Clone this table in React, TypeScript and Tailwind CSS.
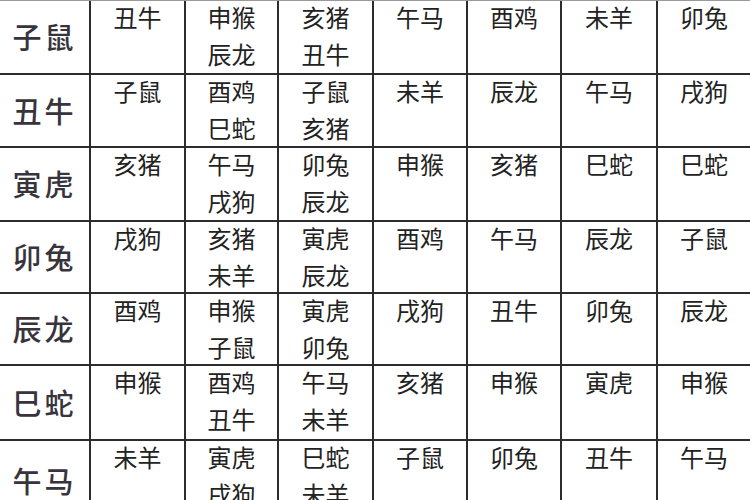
import { Fragment } from 'react';

const rows: [string, string[][]][] = [
  ['子鼠', [['丑牛'], ['申猴', '辰龙'], ['亥猪', '丑牛'], ['午马'], ['酉鸡'], ['未羊'], ['卯兔']]],
  ['丑牛', [['子鼠'], ['酉鸡', '巳蛇'], ['子鼠', '亥猪'], ['未羊'], ['辰龙'], ['午马'], ['戌狗']]],
  ['寅虎', [['亥猪'], ['午马', '戌狗'], ['卯兔', '辰龙'], ['申猴'], ['亥猪'], ['巳蛇'], ['巳蛇']]],
  ['卯兔', [['戌狗'], ['亥猪', '未羊'], ['寅虎', '辰龙'], ['酉鸡'], ['午马'], ['辰龙'], ['子鼠']]],
  ['辰龙', [['酉鸡'], ['申猴', '子鼠'], ['寅虎', '卯兔'], ['戌狗'], ['丑牛'], ['卯兔'], ['辰龙']]],
  ['巳蛇', [['申猴'], ['酉鸡', '丑牛'], ['午马', '未羊'], ['亥猪'], ['申猴'], ['寅虎'], ['申猴']]],
  ['午马', [['未羊'], ['寅虎', '戌狗'], ['巳蛇', '未羊'], ['子鼠'], ['卯兔'], ['丑牛'], ['午马']]],
];

export default function App() {
  return (
    <div
      className="w-[750px] h-[500px] overflow-hidden bg-white border-t border-[#9a9a9a]"
      style={{ fontFamily: '"Noto Sans CJK SC", "Noto Sans", sans-serif' }}
    >
      <div className="grid grid-cols-[89px_93px_91px_93px_92px_92px_94px_1fr] grid-rows-[72px_71px_72px_70px_70px_73px_80px] gap-[2px] bg-[#2c2c2c]">
        {rows.map(([head, cells]) => (
          <Fragment key={head}>
            <div className="bg-white flex items-center justify-center text-[29px] tracking-[3px] font-medium text-[#38343d]">
              {head}
            </div>
            {cells.map((lines, i) => (
              <div key={i} className="bg-white flex flex-col items-center text-[24px] leading-[37px] text-[#222]">
                <div className="-mt-[3px] flex flex-col items-center">
                  {lines.map((t, j) => (
                    <span key={j}>{t}</span>
                  ))}
                </div>
              </div>
            ))}
          </Fragment>
        ))}
      </div>
    </div>
  );
}
